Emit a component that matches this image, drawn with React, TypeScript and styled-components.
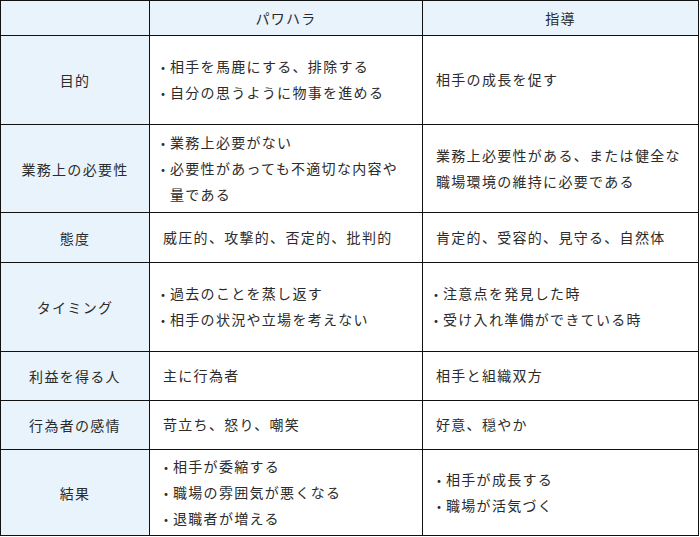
import React from "react";
import styled, { createGlobalStyle } from "styled-components";

type Row = {
  label: string;
  height: number;
  harass: string[][];
  guide: string[][];
  bullets?: boolean;
  indent?: number;
};

// each item is a list of lines (hard wraps kept as in the source)
const rows: Row[] = [
  {
    label: "目的",
    height: 88,
    bullets: true,
    harass: [["相手を馬鹿にする、排除する"], ["自分の思うように物事を進める"]],
    guide: [["相手の成長を促す"]],
  },
  {
    label: "業務上の必要性",
    height: 87,
    bullets: true,
    harass: [["業務上必要がない"], ["必要性があっても不適切な内容や", "量である"]],
    guide: [["業務上必要性がある、または健全な", "職場環境の維持に必要である"]],
  },
  {
    label: "態度",
    height: 49,
    harass: [["威圧的、攻撃的、否定的、批判的"]],
    guide: [["肯定的、受容的、見守る、自然体"]],
  },
  {
    label: "タイミング",
    height: 88,
    bullets: true,
    harass: [["過去のことを蒸し返す"], ["相手の状況や立場を考えない"]],
    guide: [["注意点を発見した時"], ["受け入れ準備ができている時"]],
  },
  {
    label: "利益を得る人",
    height: 48,
    harass: [["主に行為者"]],
    guide: [["相手と組織双方"]],
  },
  {
    label: "行為者の感情",
    height: 48,
    harass: [["苛立ち、怒り、嘲笑"]],
    guide: [["好意、穏やか"]],
  },
  {
    label: "結果",
    height: 85,
    bullets: true,
    indent: 3,
    harass: [["相手が委縮する"], ["職場の雰囲気が悪くなる"], ["退職者が増える"]],
    guide: [["相手が成長する"], ["職場が活気づく"]],
  },
];

// the guide column keeps plain text where the harassment side has bullets
const plainGuide = new Set(["目的", "業務上の必要性"]);

const CellBody = ({ items, bullets }: { items: string[][]; bullets: boolean }) => (
  <>
    {items.map((lines, i) =>
      bullets ? (
        <Item key={i}>
          <Dot>・</Dot>
          <div>
            {lines.map((l, j) => (
              <Line key={j}>{l}</Line>
            ))}
          </div>
        </Item>
      ) : (
        lines.map((l, j) => <Line key={`${i}-${j}`}>{l}</Line>)
      )
    )}
  </>
);

export default function App() {
  return (
    <>
      <GlobalStyle />
      <Table $rows={[34, ...rows.map(r => r.height)]}>
        <HeadCell />
        <HeadCell>パワハラ</HeadCell>
        <HeadCell>指導</HeadCell>
        {rows.map(r => (
          <React.Fragment key={r.label}>
            <LabelCell>{r.label}</LabelCell>
            <BodyCell $indent={r.indent ?? 0}>
              <CellBody items={r.harass} bullets={!!r.bullets} />
            </BodyCell>
            <BodyCell $indent={r.indent ?? 0}>
              <CellBody items={r.guide} bullets={!!r.bullets && !plainGuide.has(r.label)} />
            </BodyCell>
          </React.Fragment>
        ))}
      </Table>
    </>
  );
}

const GlobalStyle = createGlobalStyle`
  body {
    margin: 0;
    background: #fff;
    font-family: "Noto Sans CJK JP", "Noto Sans", sans-serif;
    color: #2b2b2b;
  }
`;

const Table = styled.div<{ $rows: number[] }>`
  display: grid;
  grid-template-columns: 148px 272px 275px;
  grid-template-rows: ${p => p.$rows.map(h => `${h}px`).join(" ")};
  gap: 1px;
  width: 697px;
  border: 1px solid #111;
  background: #111;
  font-size: 14px;
  letter-spacing: 1.3px;
`;

const HeadCell = styled.div`
  display: flex;
  align-items: center;
  justify-content: center;
  background: #e9f3fc;
`;

const LabelCell = styled(HeadCell)``;

const BodyCell = styled.div<{ $indent: number }>`
  display: flex;
  flex-direction: column;
  justify-content: center;
  padding: 0 8px 0 ${p => 13 + p.$indent}px;
  background: #fff;
`;

const Item = styled.div`
  display: flex;
`;

const Dot = styled.span`
  display: block;
  width: 14px;
  margin-left: -7px;
  flex: none;
  line-height: 26px;
  letter-spacing: 0;
`;

const Line = styled.div`
  line-height: 26px;
  white-space: nowrap;
  margin-top: -1px;
  margin-bottom: 1px;
`;
